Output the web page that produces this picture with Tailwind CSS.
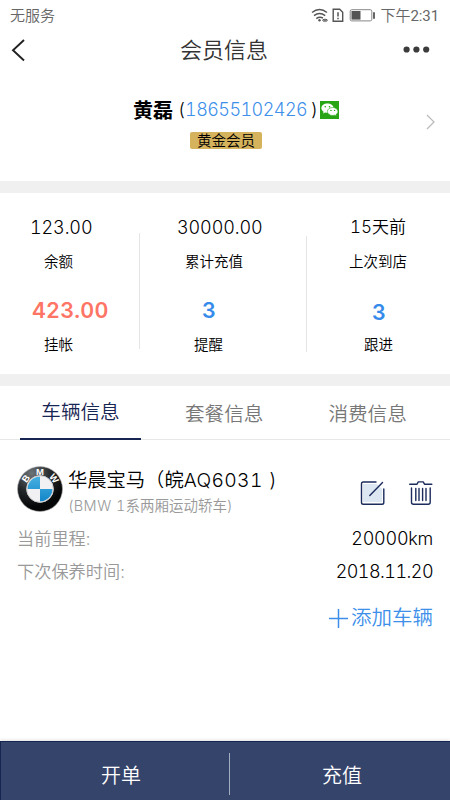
<!DOCTYPE html>
<html lang="zh-CN">
<head>
<meta charset="utf-8">
<title>会员信息</title>
<script src="https://cdn.jsdelivr.net/npm/@tailwindcss/browser@4"></script>
</head>
<body class="bg-white">
<div class="w-[450px] h-[800px] overflow-hidden flex flex-col bg-white text-black whitespace-nowrap tabular-nums font-['Inter','Noto_Sans_CJK_SC',sans-serif]">
  <div class="h-8 shrink-0 flex items-center pl-[10px] pr-[11px] text-[15px] leading-[32px] text-[#666] font-['Roboto','Noto_Sans_CJK_SC',sans-serif]">
    <span class="font-[350]">无服务</span>
    <svg class="ml-auto" width="66" height="20" viewBox="312 6 66 20" fill="none" stroke="#555" stroke-width="1.5">
      <path d="M314 12.5Q321.500 6.500 329 12.500M316 15.600Q321.500 11.500 327.200 15.600M318.300 18.600Q321.500 16.300 325 18"/>
      <circle cx="321.500" cy="20.300" r="1.200" fill="#555" stroke="none"/>
      <path stroke-width="1" d="M324.500 20.300l1.800-1.300v2.600zM329.500 20.300l-1.800-1.300v2.600z"/>
      <path stroke-width="1.400" d="M335.200 9.200h6.500l3 3v9.100h-9.500z"/>
      <path stroke-width="1.500" d="M340 12.200v4.300M340 17.700v1.600"/>
      <rect x="352.200" y="9.700" width="21.600" height="11.200" rx="1.500" stroke="#888" stroke-width="1"/>
      <rect x="353.500" y="11" width="9" height="8.600" fill="#555" stroke="none"/>
      <path stroke-width="1.800" d="M376 12.300v6.400"/>
    </svg>
    <span class="ml-[4px] font-[350]">下午<span class="font-normal tracking-[-0.1px]">2:31</span></span>
  </div>
  <div class="h-9 shrink-0 flex items-center text-[#333]">
    <svg class="ml-[10px]" width="18" height="24" viewBox="10 38 18 24" fill="none" stroke="#222" stroke-width="1.900"><path d="M24 40L13 50.200L24 60.500"/></svg>
    <h1 class="ml-[152px] text-[22px] leading-[34px] font-[350]">会员信息</h1>
    <svg class="ml-auto mr-5" width="27" height="8" fill="#3c3c3c"><circle cx="3.600" cy="3.500" r="3.100"/><circle cx="13.400" cy="3.500" r="3.100"/><circle cx="23.200" cy="3.500" r="3.100"/></svg>
  </div>

  <section class="h-[113px] shrink-0 flex pt-[27px] pl-[133px]">
    <div class="w-[206px]">
      <div class="h-[30px] flex items-center leading-[30px]">
        <span class="text-[20px] font-bold pt-px">黄磊</span>
        <span class="ml-[5px] text-[18px] font-light">(</span>
        <span class="text-[18px] font-light tracking-[-0.55px] text-[#3d8fea]">18655102426</span>
        <span class="ml-auto text-[18px] font-light">)</span>
        <svg class="ml-[2px]" width="19" height="18" viewBox="0 0 18 18" preserveAspectRatio="none">
          <rect width="18" height="18" fill="#28a515"/>
          <path fill="#fff" d="M7 2.500C3.800 2.500 1.300 4.500 1.300 7.100c0 1.500.8 2.800 2.100 3.600l-.5 1.700 2-1c.7.200 1.500.3 2.200.3 3.200 0 5.800-2 5.800-4.600S10.200 2.500 7 2.500z"/>
          <path fill="#fff" stroke="#28a515" stroke-width=".6" d="M12 6.500c-2.800 0-5 1.800-5 4s2.200 4 5 4c.6 0 1.200-.1 1.700-.3l1.900.9-.5-1.500c1.200-.7 1.900-1.800 1.900-3.100 0-2.200-2.200-4-5-4z"/>
          <g fill="#28a515"><circle cx="5" cy="5.800" r=".8"/><circle cx="9" cy="5.800" r=".8"/><circle cx="10.400" cy="9.400" r=".7"/><circle cx="13.800" cy="9.400" r=".7"/></g>
        </svg>
      </div>
      <div class="mt-[7px] ml-[57px] w-[72px] h-[17px] rounded-[2px] bg-[#d5b35c] text-[14.500px] leading-[18px] text-center font-[350]">黄金会员</div>
    </div>
    <svg class="ml-[86px] mt-[18px]" width="12" height="18" fill="none" stroke="#bbb" stroke-width="1.300"><path d="M2 2L9 9L2 16"/></svg>
  </section>

  <div class="h-3 shrink-0 bg-[#f0f0f0]"></div>

  <section class="h-[181px] shrink-0 flex font-[350]">
    <div class="w-[139px] pt-[20px]">
      <div class="h-[30px] pl-[30px] text-[18px] leading-[30px] tracking-[-0.1px]">123.00</div>
      <div class="mt-[5px] h-[28px] pl-[44px] text-[14.500px] leading-[28px]">余额</div>
      <div class="mt-[19px] h-[30px] pl-[32px] text-[21.500px] leading-[30px] tracking-[0.2px] font-semibold text-[#ff7565]">423.00</div>
      <div class="mt-[6px] h-[28px] pl-[44px] text-[14.500px] leading-[28px]">挂帐</div>
    </div>
    <div class="mt-[40px] w-px h-[116px] bg-[#e5e5e5]"></div>
    <div class="w-[166px] pt-[20px]">
      <div class="h-[30px] pl-[37px] text-[18px] leading-[30px] tracking-[-0.1px]">30000.00</div>
      <div class="mt-[5px] h-[28px] pl-[45px] text-[14.500px] leading-[28px]">累计充值</div>
      <div class="mt-[19px] h-[30px] pl-[62px] text-[21.500px] leading-[30px] font-semibold text-[#368bea]">3</div>
      <div class="mt-[6px] h-[28px] pl-[54px] text-[14.500px] leading-[28px]">提醒</div>
    </div>
    <div class="mt-[43px] w-px h-[116px] bg-[#e5e5e5]"></div>
    <div class="w-[142px] pt-[19px] text-center">
      <div class="h-[30px] text-[17px] leading-[30px]">15天前</div>
      <div class="mt-[6px] h-[28px] text-[14.500px] leading-[28px]">上次到店</div>
      <div class="mt-[21px] h-[30px] pl-[2px] text-[21.500px] leading-[30px] font-semibold text-[#368bea]">3</div>
      <div class="mt-[4px] h-[28px] pl-px text-[14.500px] leading-[28px]">跟进</div>
    </div>
  </section>

  <div class="h-3 shrink-0 bg-[#f0f0f0]"></div>

  <nav class="h-[54px] shrink-0 flex border-b border-[#e8e8e8] pl-5 text-[19.600px] font-[350] text-[#777]">
    <div class="w-[121px] h-[54px] border-b-2 border-[#172553] text-center leading-[52px] text-[#172553]">车辆信息</div>
    <div class="ml-[44px] leading-[56px]">套餐信息</div>
    <div class="ml-[65px] leading-[56px]">消费信息</div>
  </nav>

  <section class="h-[301px] shrink-0 pl-[17px] pr-[17px] pt-[24px]">
    <div class="h-[54px] flex">
      <svg class="mt-[2px] shrink-0" width="46" height="46" viewBox="0 0 46 46">
        <defs>
          <radialGradient id="ring" cx=".32" cy=".15" r=".75"><stop offset="0" stop-color="#6d7478"/><stop offset=".55" stop-color="#25292c"/><stop offset="1" stop-color="#050607"/></radialGradient>
          <linearGradient id="blue" x2="0" y2="1"><stop offset="0" stop-color="#45b0e2"/><stop offset="1" stop-color="#1486c8"/></linearGradient>
        </defs>
        <circle cx="23" cy="23" r="22.500" fill="url(#ring)" stroke="#b0b0b0" stroke-width=".6"/>
        <circle cx="23" cy="23" r="13.500" fill="#f1f1f3"/>
        <path fill="url(#blue)" d="M23 23V10.500A12.500 12.500 0 0 0 10.500 23zM23 23v12.500A12.500 12.500 0 0 0 35.500 23z"/>
        <circle cx="23" cy="23" r="13.300" fill="none" stroke="#ccc" stroke-width="1"/>
        <g fill="#fff" font-family="Liberation Sans, sans-serif" font-weight="700" font-size="9.500" text-anchor="middle">
          <text transform="translate(11.600 14.500) rotate(-54)">B</text>
          <text x="23" y="8.600">M</text>
          <text transform="translate(34.400 14.500) rotate(54)">W</text>
        </g>
      </svg>
      <div class="ml-[5px]">
        <div class="h-[30px] text-[19.300px] leading-[32px] font-[350]">华晨宝马（皖<span class="tracking-[0.35px]">AQ6031 <span class="ml-px">)</span></span></div>
        <div class="h-[24px] text-[14.500px] leading-[24px] font-[350] text-[#999]">(<span class="tracking-[0.5px]">BMW </span> 1系两厢运动轿车)</div>
      </div>
      <svg class="ml-auto mt-[15px] shrink-0" width="74" height="28" viewBox="359 479 74 28" fill="none" stroke="#1b2b5b" stroke-width="1.400" stroke-linecap="round" stroke-linejoin="round">
        <path fill="#dde7f2" stroke="none" d="M363 484h14l5 5v13h-19z"/>
        <path d="M376 482h-12.700q-1.800 0-1.800 1.800v18.700q0 1.800 1.800 1.800h18.700q1.800 0 1.800-1.800V489"/>
        <path d="M382.500 482.500L369.800 495.500"/>
        <path d="M409.700 484.200h7.300l1.300-2.300h4.900l1.300 2.300h7.300M411.500 488v14.300q0 2 2 2h14.700q2 0 2-2V488M415.800 488.500v12M419 488.500v12M422.600 488.500v12M426 488.500v12"/>
      </svg>
    </div>
    <div class="h-[32px] mt-[4px] flex justify-between leading-[34px] font-[350]">
      <span class="text-[17.200px] text-[#999]">当前里程:</span><span class="text-[18px] tracking-[-0.25px]">20000km</span>
    </div>
    <div class="h-[33px] flex justify-between leading-[35px] font-[350]">
      <span class="text-[17.200px] text-[#999]">下次保养时间:</span><span class="text-[18px] tracking-[-0.55px]">2018.11.20</span>
    </div>
    <div class="h-[40px] mt-[11px] flex justify-end items-center text-[20.500px] leading-[42px] font-[350] text-[#3d8fea]">
      <svg class="mr-[3px]" width="19" height="19" stroke="#3d8fea" stroke-width="1.500"><path d="M0 9.500h19M9.500 0v19"/></svg>添加车辆
    </div>
  </section>

  <footer class="h-[59px] shrink-0 flex bg-[#35446b] border-t border-l border-[#172553] text-white text-[20px] leading-[68px] font-[350] shadow-[0_-1px_3px_rgba(0,0,0,0.12)]">
    <div class="w-[228px] pl-[100px]">开单</div>
    <div class="w-px h-[42px] mt-[11px] bg-[#a5adc2]"></div>
    <div class="pl-[92px]">充值</div>
  </footer>
</div>
</body>
</html>
